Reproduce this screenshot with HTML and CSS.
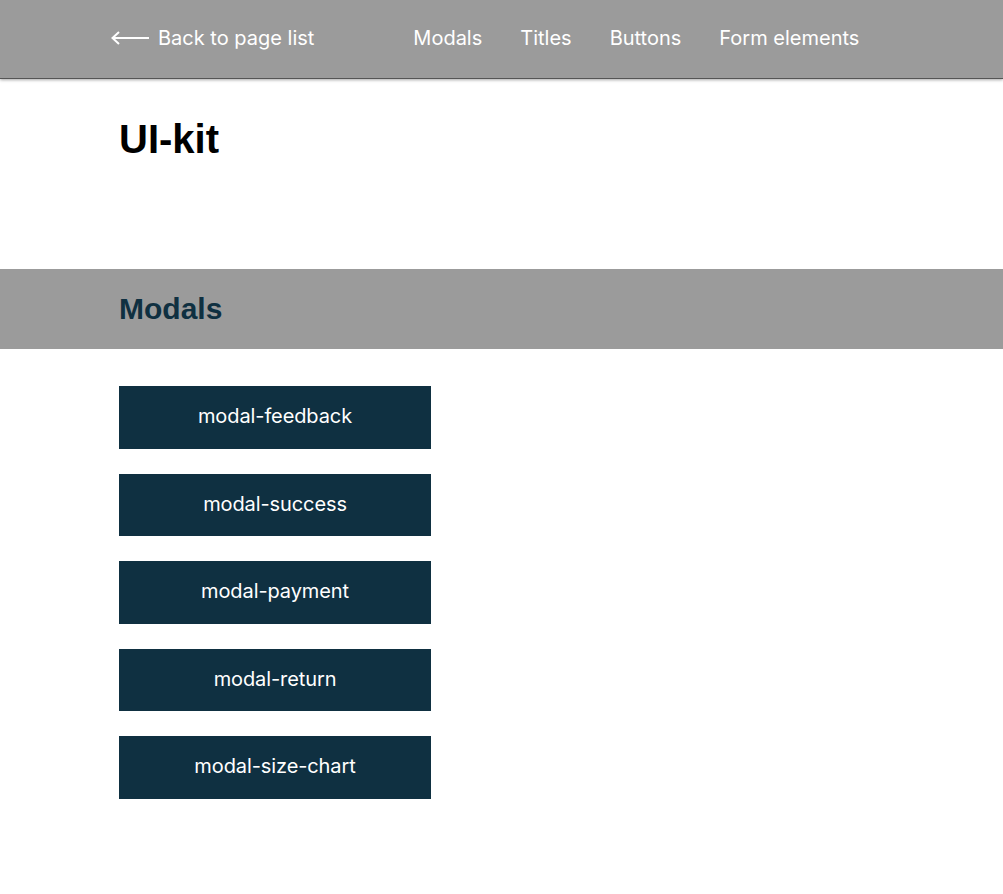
FILE: index.html
```html
<!DOCTYPE html>
<html lang="en">
<head>
<meta charset="utf-8">
<title>UI-kit</title>
<link rel="stylesheet" href="styles.css">
</head>
<body>
<header class="header">
  <div class="header__inner">
    <a class="back-link" href="#">
      <svg class="back-link__icon" width="40" height="16" viewBox="0 0 40 16" fill="none" stroke="#fff" stroke-width="2">
        <path d="M39 8H3"/>
        <path d="M9 2L2.5 8L9 14"/>
      </svg>
      <span>Back to page list</span>
    </a>
    <nav class="nav">
      <a class="nav__link" href="#">Modals</a>
      <a class="nav__link" href="#">Titles</a>
      <a class="nav__link" href="#">Buttons</a>
      <a class="nav__link" href="#">Form elements</a>
    </nav>
  </div>
</header>
<main>
  <div class="container">
    <h1 class="page-title">UI-kit</h1>
  </div>
  <section class="section">
    <div class="section__bar">
      <div class="container">
        <h2 class="section__title">Modals</h2>
      </div>
    </div>
    <div class="container">
      <div class="button-list">
        <button class="btn" type="button">modal-feedback</button>
        <button class="btn" type="button">modal-success</button>
        <button class="btn" type="button">modal-payment</button>
        <button class="btn" type="button">modal-return</button>
        <button class="btn" type="button">modal-size-chart</button>
      </div>
    </div>
  </section>
</main>
</body>
</html>
```
FILE: styles.css
```css
* { box-sizing: border-box; }
html, body { margin: 0; padding: 0; background: #fff; }
body { font-family: Inter, "Noto Sans", sans-serif; }

.header {
  height: 79px;
  background: #9b9b9b;
  border-bottom: 1px solid #555;
  box-shadow: 0 1px 3px rgba(0,0,0,0.35);
  position: relative;
}
.header__inner {
  display: flex;
  align-items: center;
  height: 76px;
  padding-left: 110px;
}
.back-link {
  display: flex;
  align-items: center;
  gap: 8px;
  color: #fff;
  text-decoration: none;
  font-size: 20px;
}
.back-link__icon { display: block; }
.nav {
  display: flex;
  gap: 38px;
  margin-left: 99px;
}
.nav__link {
  color: #fff;
  text-decoration: none;
  font-size: 20px;
}

.container { padding-left: 119px; }

.page-title {
  margin: 0;
  padding-top: 37px;
  height: 190px;
  font-family: "Liberation Sans", Arial, sans-serif;
  font-weight: 700;
  font-size: 40px;
  line-height: 46px;
  color: #000;
}

.section__bar {
  background: #9b9b9b;
  height: 80px;
  display: flex;
  align-items: center;
}
.section__title {
  margin: 0;
  font-family: "Liberation Sans", Arial, sans-serif;
  font-weight: 700;
  font-size: 30px;
  color: #0f3041;
}

.button-list {
  display: flex;
  flex-direction: column;
  align-items: flex-start;
  gap: 25px;
  padding-top: 37px;
}
.btn {
  width: 312px;
  height: 62.5px;
  border: 0;
  background: #0f3041;
  color: #fff;
  font-family: Inter, "Noto Sans", sans-serif;
  font-size: 20px;
  letter-spacing: -0.1px;
  cursor: pointer;
  padding: 0 0 2px;
}
```
